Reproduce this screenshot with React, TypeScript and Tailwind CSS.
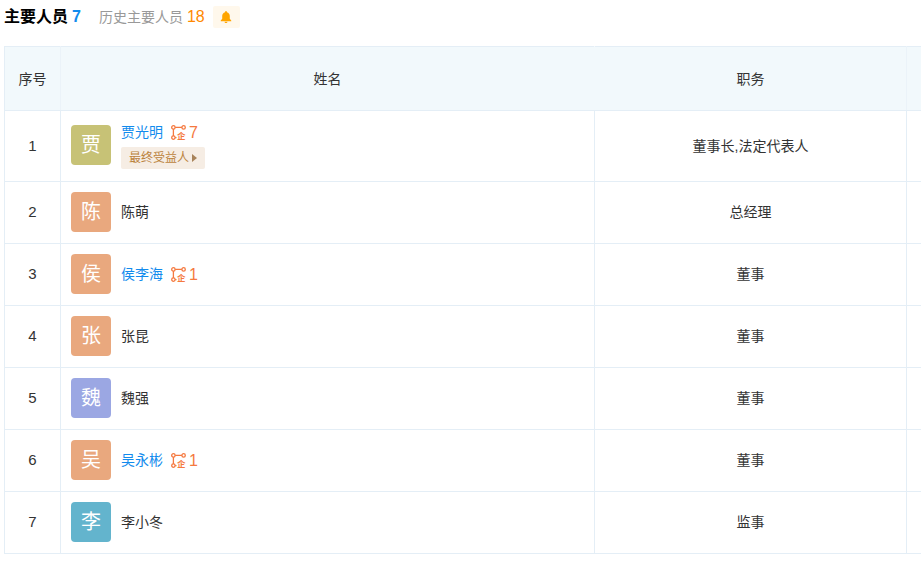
import React from "react";

const FONT = { fontFamily: '"Liberation Sans", "Noto Sans CJK SC", sans-serif' };

function RelIcon() {
  return (
    <svg width="15" height="15" viewBox="0 0 15 15" fill="none" stroke="#f5793f" strokeWidth="1.3">
      <circle cx="2.400" cy="2.400" r="1.700" />
      <circle cx="12.600" cy="2.400" r="1.700" />
      <circle cx="2.400" cy="12.600" r="1.700" />
      <path d="M4.100 2.400H10.900M2.400 4.100V10.900M4.100 12.600H5.500" />
      <text x="6" y="14" fontSize="8.500" fontWeight="700" fill="#f5793f" stroke="none">企</text>
    </svg>
  );
}

function Bell() {
  return (
    <svg width="12" height="14" viewBox="0 0 13 14" fill="#ffa500">
      <path d="M6.500 0.500c.6 0 1 .4 1 1v.4c2 .5 3.100 2.200 3.100 4.100v2.800l1.600 2v.7H.8v-.7l1.600-2V6c0-1.900 1.100-3.600 3.100-4.100v-.4c0-.6.4-1 1-1z" />
      <path d="M4.900 12.100h3.200c0 .9-.7 1.500-1.600 1.500s-1.600-.6-1.600-1.500z" />
    </svg>
  );
}

const rows = [
  { n: 1, name: "贾光明", color: "bg-[#c7c276]", link: true, count: 7, badge: true, title: "董事长,法定代表人", h: "h-[71px]" },
  { n: 2, name: "陈萌", color: "bg-[#e9a87e]", link: false, title: "总经理", h: "h-[62px]" },
  { n: 3, name: "侯李海", color: "bg-[#e9a87e]", link: true, count: 1, title: "董事", h: "h-[62px]" },
  { n: 4, name: "张昆", color: "bg-[#e9a87e]", link: false, title: "董事", h: "h-[62px]" },
  { n: 5, name: "魏强", color: "bg-[#9ba7e3]", link: false, title: "董事", h: "h-[62px]" },
  { n: 6, name: "吴永彬", color: "bg-[#e9a87e]", link: true, count: 1, title: "董事", h: "h-[62px]" },
  { n: 7, name: "李小冬", color: "bg-[#63b4cd]", link: false, title: "监事", h: "h-[62px]" },
];

export default function App() {
  return (
    <div className="w-[921px] h-[576px] overflow-hidden bg-white text-[14px] text-[#333333]" style={FONT}>
      <div className="flex items-center h-[46px] pl-1 pb-[12px]">
        <span className="text-[16px] font-bold text-black">主要人员</span>
        <span className="ml-1 text-[16px] font-bold text-[#128bed]">7</span>
        <span className="ml-[18px] text-[#999999]">历史主要人员</span>
        <span className="ml-1 text-[16px] text-[#ff8900]">18</span>
        <span className="ml-[8px] flex h-[22px] w-[27px] items-center justify-center rounded-[2px] bg-[#fff8ec]">
          <Bell />
        </span>
      </div>
      <table className="ml-1 w-[1000px] table-fixed border-collapse">
        <colgroup>
          <col className="w-[56px]" />
          <col className="w-[534px]" />
          <col className="w-[312px]" />
          <col />
        </colgroup>
        <thead>
          <tr className="h-[64px] bg-[#f2f9fc]">
            <th className="border border-[#e4eef6] border-r-[#ebf3f9] pt-[2px] font-normal text-center">序号</th>
            <th className="border border-[#e4eef6] border-l-[#ebf3f9] border-r-[#f2f9fc] pt-[2px] font-normal text-center">姓名</th>
            <th className="border border-[#e4eef6] border-l-[#f2f9fc] border-r-[#ebf3f9] pt-[2px] font-normal text-center">职务</th>
            <th className="border border-[#e4eef6] border-l-[#ebf3f9] font-normal text-center"></th>
          </tr>
        </thead>
        <tbody>
          {rows.map((r) => (
            <tr key={r.n} className={r.h}>
              <td className="border border-[#e4eef6] text-center text-[15px]">{r.n}</td>
              <td className="border border-[#e4eef6] px-[10px]">
                <div className="flex items-center gap-[10px]">
                  <div className={`mb-[2px] flex h-10 w-10 shrink-0 items-center justify-center rounded-[4px] text-[20px] text-white ${r.color}`}>
                    {r.name[0]}
                  </div>
                  <div className="flex flex-col items-start gap-[5px]">
                    <div className="flex items-center h-[18px]">
                      <span className={r.link ? "text-[#128bed]" : "text-[#333333]"}>{r.name}</span>
                      {r.count ? (
                        <span className="ml-2 flex items-center gap-[3px] text-[16px] text-[#f5793f]">
                          <RelIcon />
                          {r.count}
                        </span>
                      ) : null}
                    </div>
                    {r.badge ? (
                      <span className="flex h-[22px] items-center gap-[3px] rounded-[2px] bg-[#f6ede4] px-2 text-[12px] text-[#bb833d]">
                        最终受益人
                        <span className="h-0 w-0 border-y-[4px] border-l-[5px] border-y-transparent border-l-[#a8835a]" />
                      </span>
                    ) : null}
                  </div>
                </div>
              </td>
              <td className="border border-[#e4eef6] text-center">{r.title}</td>
              <td className="border border-[#e4eef6]"></td>
            </tr>
          ))}
        </tbody>
      </table>
    </div>
  );
}
